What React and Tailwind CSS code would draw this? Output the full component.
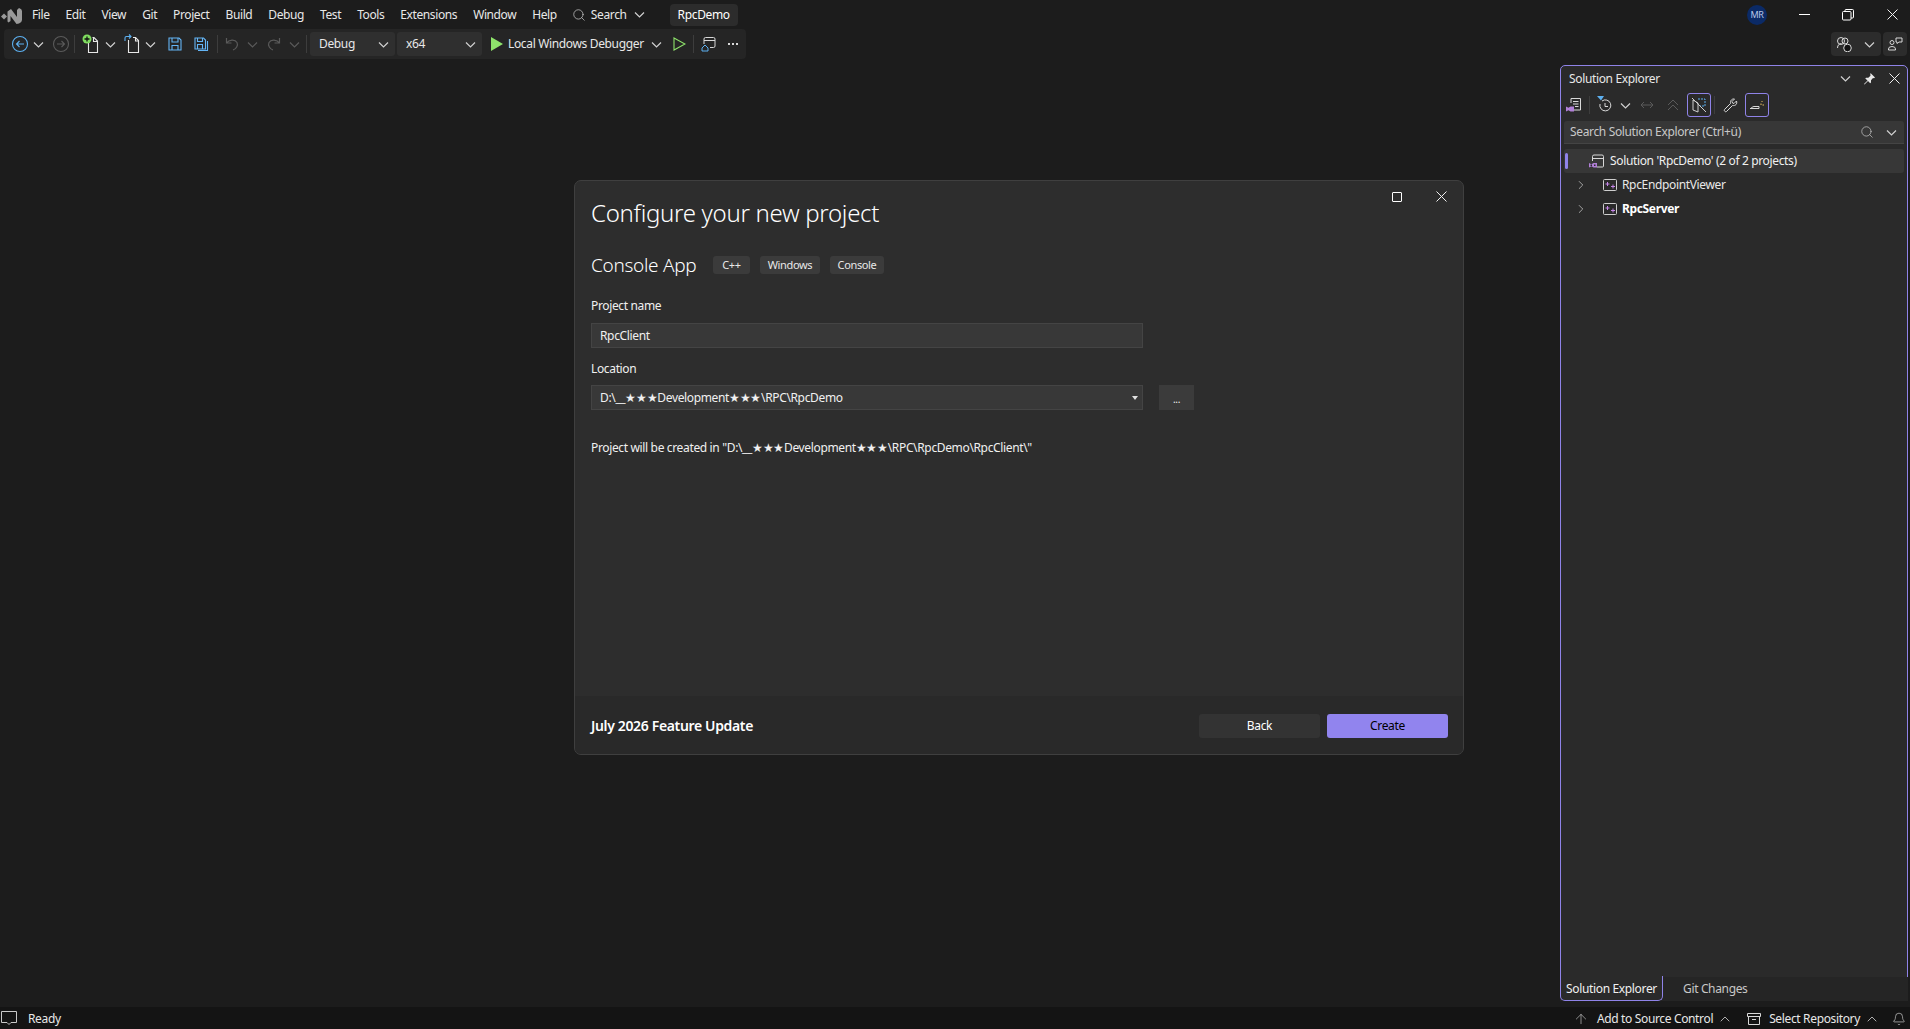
import { ChevronRight, ChevronUp, Search, Bell, ArrowUp } from "lucide-react";

const menus = ["File", "Edit", "View", "Git", "Project", "Build", "Debug", "Test", "Tools", "Extensions", "Window", "Help"];

const Chev = ({ className = "", dim }) => (
  <svg width="13" height="13" viewBox="0 0 13 13" fill="none" stroke={dim ? "#5a5a5a" : "#d0d0d0"} strokeWidth="1.200" className={`shrink-0 ${className}`}>
    <path d="M2 4.500l4.500 4.500L11 4.500" />
  </svg>
);

const CloseIcon = ({ className = "" }) => (
  <svg width="11" height="11" viewBox="0 0 11 11" fill="none" stroke="#f0f0f0" className={`shrink-0 ${className}`}>
    <path d="M.5.5l10 10M10.500.5l-10 10" />
  </svg>
);

const Sep = ({ className = "" }) => <div className={`w-px h-[18px] bg-[#3d3d3d] shrink-0 ${className}`} />;

const Logo = () => (
  <svg width="21" height="18" viewBox="0 0 21 18" className="shrink-0 ml-[1px] mt-[3px]">
    <path d="M0 9.500l3-3 3 3-3 3z" fill="#9a9a9a" />
    <path d="M6.500 4.500L10 2l6 8V3l2-2q3 1 3 3v9q0 2-3 3.500L15.500 17 9.500 9v5l-2 1.500-1-1z" fill="#9a9a9a" />
  </svg>
);

const PageIcon = ({ plus }) => (
  <svg width="20" height="20" viewBox="0 0 20 20" fill="none" stroke="#e8e8e8" strokeWidth="1.100" className="shrink-0">
    <path d={plus ? "M6.500 9v9.500h9V7l-3.500-3.500h-1.500" : "M5.500 6v12.500h10V6.500L12.500 3.500H10"} />
    <path d={plus ? "M11.500 3.500V7.500h4" : "M12.500 3.500V7h3"} />
    {plus && <circle cx="5" cy="5" r="4.500" fill="#7fdc5f" stroke="none" />}
    {plus && <path d="M5 2.500v5M2.500 5h5" stroke="#111111" strokeWidth="1.300" />}
    {!plus && <path d="M2 7V4q0-1.500 1.500-1.500H8M6 .5l2 2-2 2" stroke="#5db0f0" />}
  </svg>
);

const SaveIcon = ({ all }) => (
  <svg width="16" height="16" viewBox="0 0 16 16" fill="none" stroke="#64b5f6" strokeWidth="1.100" className="shrink-0">
    {all ? (
      <>
        <path d="M2 2h8.500l2 2v9H2z" />
        <path d="M4.500 2v3.500h5V2M4.500 13V8.500h5V13" />
        <path d="M14.500 5v9.500H5" />
      </>
    ) : (
      <>
        <path d="M2 2h10l2 2v10H2z" />
        <path d="M5 2v4h6V2M5 14V9.500h6V14" />
      </>
    )}
  </svg>
);

const CircleArrow = ({ dir, color }) => (
  <svg width="18" height="18" viewBox="0 0 18 18" fill="none" stroke={color} strokeWidth="1.100" className="shrink-0">
    <circle cx="9" cy="9" r="7.500" />
    {dir === "left" ? <path d="M13 9H5.500M8.500 6l-3 3 3 3" /> : <path d="M5 9h7.500M9.500 6l3 3-3 3" />}
  </svg>
);

const UndoIcon = ({ flip }) => (
  <svg width="16" height="16" viewBox="0 0 16 16" fill="none" stroke="#5a5a5a" strokeWidth="1.200" className={`shrink-0 ${flip ? "-scale-x-100" : ""}`}>
    <path d="M2.500 2v5h5M2.500 7C5 3.500 11 3 13 6.500c1.500 3-1 6.500-4 7.500" />
  </svg>
);

const SolutionIcon = () => (
  <svg width="16" height="16" viewBox="0 0 16 16" fill="none" className="shrink-0">
    <path d="M3.500 8V3.500q0-1.500 1.500-1.500h8q1.500 0 1.500 1.500V13q0 1-1 1H8" stroke="#d8d8d8" />
    <path d="M3.500 5.500h11" stroke="#d8d8d8" />
    <path d="M0 10v4.500l2.500-1.200 2 1.200H8V10H4.500l-2 1.200z" fill="#b180d7" />
    <rect x="1.500" y="11.500" width="1.500" height="1.500" fill="#2b2b2b" />
    <rect x="5" y="11.500" width="1.500" height="1.500" fill="#2b2b2b" />
  </svg>
);

const ProjectIcon = () => (
  <svg width="14" height="12" viewBox="0 0 14 12" fill="none" className="shrink-0">
    <rect x="0.500" y="0.500" width="13" height="11" rx="1" stroke="#cfcfcf" />
    <path d="M2.500 5h4M4.500 3v4M8 7.500h4M10 5.500v4" stroke="#c586e8" />
  </svg>
);

const Tag = ({ width, children }) => (
  <div className={`h-[18px] flex items-center justify-center bg-[#3b3b3b] rounded-[3px] text-[11px] text-[#e8e8e8] ${width}`}>{children}</div>
);

const TreeRow = ({ bold, children }) => (
  <div className="h-6 flex items-center pl-[13px]">
    <ChevronRight size={14} strokeWidth={1.300} className="text-[#c8c8c8]" />
    <div className="ml-[15px]"><ProjectIcon /></div>
    <span className={`ml-[5px] ${bold ? "font-bold text-white" : "text-[#e8e8e8]"}`}>{children}</span>
  </div>
);

const Dialog = () => (
  <div className="absolute left-[574px] top-[180px] w-[890px] h-[575px] flex flex-col bg-[#2d2d2d] border border-[#3f3f3f] rounded-[7px] overflow-hidden z-10 text-[12px] text-[#f0f0f0]">
    <div className="flex-1 relative pl-4 pt-[16px]">
      <div className="absolute right-[16px] top-[10px] flex items-center gap-[34px]">
        <div className="w-[10px] h-[10px] border border-white rounded-[1px]" />
        <CloseIcon />
      </div>
      <h1 className="text-[24px] leading-[32px] font-light text-white tracking-[-0.3px]">Configure your new project</h1>
      <div className="flex items-center mt-[24px] h-[24px]">
        <div className="w-[122px] text-[19px] leading-[24px] font-light text-white tracking-[-0.3px]">Console App</div>
        <div className="flex gap-[10px]">
          <Tag width="w-[37px]">C++</Tag>
          <Tag width="w-[60px]">Windows</Tag>
          <Tag width="w-[54px]">Console</Tag>
        </div>
      </div>
      <div className="mt-[21px] leading-[16px]">Project name</div>
      <div className="mt-[9px] w-[552px] h-[25px] flex items-center pl-[8px] bg-[#383838] border border-[#444444]">RpcClient</div>
      <div className="mt-[13px] leading-[16px]">Location</div>
      <div className="flex mt-[8px]">
        <div className="w-[552px] h-[25px] flex items-center justify-between pl-[8px] pr-[4px] bg-[#383838] border border-[#444444]">
          <span>D:\__★★★Development★★★\RPC\RpcDemo</span>
          <span className="w-0 h-0 border-x-[3px] border-x-transparent border-t-[4px] border-t-[#e0e0e0]" />
        </div>
        <div className="ml-[16px] w-[35px] h-[25px] bg-[#3b3b3b] flex items-end justify-center pb-[6px] text-[10px] leading-[10px]">...</div>
      </div>
      <div className="mt-[30px] leading-[16px]">Project will be created in "D:\__★★★Development★★★\RPC\RpcDemo\RpcClient\"</div>
    </div>
    <div className="h-[58px] shrink-0 bg-[#292929] flex items-center pl-4 pr-[15px] pt-[2px]">
      <div className="text-[14px] font-semibold text-white -mt-px">July 2026 Feature Update</div>
      <div className="ml-auto flex gap-[7px]">
        <div className="w-[121px] h-6 bg-[#333333] rounded-[3px] flex items-center justify-center text-white">Back</div>
        <div className="w-[121px] h-6 bg-[#9184ee] rounded-[3px] flex items-center justify-center text-black">Create</div>
      </div>
    </div>
  </div>
);

const SolutionExplorer = () => (
  <div className="w-[348px] flex flex-col text-[12px] text-[#e8e8e8]">
    <div className="flex-1 flex flex-col bg-[#2a2a2a] border border-[#8f83e8] rounded-t-[5px]">
      <div className="h-[25px] flex items-center pl-2 pr-[7px]">
        <span>Solution Explorer</span>
        <Chev className="ml-auto" />
        <svg width="13" height="13" viewBox="0 0 13 13" className="ml-[11px]" fill="#e8e8e8"><path d="M7.500 1l4.500 4.500-1 .7-1-.2-2 2.200v2.300l-.8.700L5 9l-3.500 3.500L1 12l3.500-3.500L2.300 6.500l.7-.8h2.300l2.200-2-.2-1z" /></svg>
        <CloseIcon className="ml-[13px]" />
      </div>
      <div className="h-[28px] flex items-center pl-[5px]">
        <svg width="16" height="16" viewBox="0 0 16 16" fill="none" className="shrink-0">
          <path d="M5 6V1.500h9.500V13H8M7 4.500h5.500M7 7h5.500M9 9.500h3.500" stroke="#d8d8d8" />
          <path d="M0 9.500v5l2.500-1.300 2 1.300H8V9.500H4.500l-2 1.300z" fill="#b180d7" />
        </svg>
        <Sep className="ml-[7px]" />
        <svg width="18" height="18" viewBox="0 0 18 18" fill="none" className="ml-[6px] shrink-0">
          <path d="M1 0h7L5 4.500z" fill="#5db0f0" />
          <path d="M6 5a5.500 5.500 0 1 1-2 3" stroke="#d8d8d8" />
          <path d="M9 7v3.500h3" stroke="#d8d8d8" />
        </svg>
        <Chev className="ml-[5px]" />
        <svg width="14" height="10" viewBox="0 0 14 10" fill="none" stroke="#5a5a5a" className="ml-[8px] shrink-0"><path d="M1 5h12M4 2L1 5l3 3M10 2l3 3-3 3" /></svg>
        <svg width="12" height="12" viewBox="0 0 12 12" fill="none" stroke="#5a5a5a" className="ml-[13px] shrink-0"><path d="M1 6l5-5 5 5M1 11l5-5 5 5" /></svg>
        <div className="ml-[8px] w-6 h-6 border border-[#8f83e8] rounded-[3px] flex items-center justify-center shrink-0">
          <svg width="16" height="16" viewBox="0 0 16 16" fill="none">
            <path d="M2 3v10l5 2V6z" stroke="#cfcfcf" /><path d="M7 2h7v7H9" stroke="#5db0f0" strokeDasharray="2 1" /><path d="M1 1l14 14" stroke="#cfcfcf" />
          </svg>
        </div>
        <Sep className="ml-[3px]" />
        <svg width="15" height="15" viewBox="0 0 15 15" fill="none" stroke="#d8d8d8" className="ml-[8px] shrink-0"><path d="M13.500 3L11 5.500 9.500 5 9 3.500 11.500 1C9 .5 7 2.500 7.500 5.500L1.500 11.500c-1 1 1 3 2 2l6-6c3 .5 5-1.500 4-4.500z" /></svg>
        <div className="ml-[7px] w-6 h-6 border border-[#8f83e8] rounded-[3px] flex items-center justify-center shrink-0">
          <svg width="16" height="16" viewBox="0 0 16 16" fill="none">
            <path d="M1 11.500h9v-2H5q-2 0-3 2" stroke="#d8d8d8" /><path d="M12 8V6.500M13.500 8H15M12.500 5l1-1" stroke="#e8c060" />
          </svg>
        </div>
      </div>
      <div className="mx-[3px] mt-[2px] h-[23px] bg-[#373737] border-b border-[#444444] rounded-t-[3px] flex items-center pl-[6px] pr-[6px] text-[#c8c8c8]">
        <span>Search Solution Explorer (Ctrl+ü)</span>
        <Search size={14} strokeWidth={1.200} className="ml-auto" />
        <Chev className="ml-[11px]" />
      </div>
      <div className="mt-[5px]">
        <div className="mx-[3px] h-6 bg-[#373737] rounded-[3px] flex items-center relative">
          <div className="absolute left-[1px] top-[4px] w-[3px] h-[16px] rounded-full bg-[#8f83e8]" />
          <div className="ml-[25px]"><SolutionIcon /></div>
          <span className="ml-[5px] text-[#f0f0f0]">Solution 'RpcDemo' (2 of 2 projects)</span>
        </div>
        <TreeRow>RpcEndpointViewer</TreeRow>
        <TreeRow bold>RpcServer</TreeRow>
      </div>
    </div>
    <div className="h-[24px] flex bg-[#252525] -mt-px">
      <div className="w-[103px] border border-t-0 border-[#8f83e8] rounded-b-[5px] bg-[#2a2a2a] flex items-center justify-center pt-px text-[#f0f0f0] relative z-10 -mt-px">Solution Explorer</div>
      <div className="pl-[20px] flex items-center text-[#c8c8c8]">Git Changes</div>
    </div>
  </div>
);

export default function App() {
  return (
    <div className="relative h-screen w-full overflow-hidden flex flex-col bg-[#1c1c1c] font-['Noto_Sans',sans-serif] tracking-[-0.35px]">
      {/* title bar */}
      <div className="h-[29px] shrink-0 flex items-center text-[12px] text-[#e8e8e8]">
        <Logo />
        <div className="flex gap-4 ml-[10px] tracking-[-0.4px]">
          {menus.map((m) => <span key={m}>{m}</span>)}
        </div>
        <div className="flex items-center ml-[15px]">
          <Search size={14} strokeWidth={1.200} className="text-[#d0d0d0]" />
          <span className="ml-[5px]">Search</span>
          <Chev className="ml-[6px]" />
        </div>
        <div className="ml-[24px] w-[68px] h-[22px] bg-[#2c2c2c] rounded-[4px] flex items-center justify-center text-white">RpcDemo</div>
        <div className="ml-auto w-[20px] h-[20px] rounded-full bg-[#0b2a66] text-[#b8c8e8] text-[9px] flex items-center justify-center">MR</div>
        <div className="ml-[32px] w-[11px] h-px bg-white" />
        <svg width="12" height="12" viewBox="0 0 12 12" fill="none" stroke="#ffffff" className="ml-[32px]">
          <rect x="0.500" y="2.500" width="8.500" height="8.500" rx="1" /><path d="M3 2.500V1.500q0-1 1-1h6.500q1 0 1 1V8q0 1-1 1H9" />
        </svg>
        <CloseIcon className="ml-[33px] mr-[12px]" />
      </div>
      {/* toolbar */}
      <div className="h-[30px] shrink-0 flex items-center text-[12px] text-[#e8e8e8]">
        <div className="ml-[4px] w-[742px] h-[30px] bg-[#252525] rounded-[4px] flex items-center">
          <div className="ml-[7px]"><CircleArrow dir="left" color="#5db0f0" /></div>
          <Chev className="ml-[3px]" />
          <div className="ml-[7px]"><CircleArrow dir="right" color="#5a5a5a" /></div>
          <Sep className="ml-[4px]" />
          <div className="ml-[7px]"><PageIcon plus /></div>
          <Chev className="ml-[2px]" />
          <div className="ml-[6px]"><PageIcon /></div>
          <Chev className="ml-[1px]" />
          <div className="ml-[10px]"><SaveIcon /></div>
          <div className="ml-[10px]"><SaveIcon all /></div>
          <Sep className="ml-[8px]" />
          <div className="ml-[6px]"><UndoIcon /></div>
          <Chev dim className="ml-[6px]" />
          <div className="ml-[7px]"><UndoIcon flip /></div>
          <Chev dim className="ml-[6px]" />
          <Sep className="ml-[5px]" />
          <div className="ml-[3px] w-[85px] h-6 bg-[#2f2f2f] rounded-[3px] flex items-center justify-between pl-[9px] pr-[5px]">Debug<Chev /></div>
          <div className="ml-[2px] w-[85px] h-6 bg-[#2f2f2f] rounded-[3px] flex items-center justify-between pl-[9px] pr-[5px]">x64<Chev /></div>
          <svg width="12" height="14" viewBox="0 0 12 14" className="ml-[9px] shrink-0"><path d="M0 0l12 7-12 7z" fill="#8ee36b" /></svg>
          <span className="ml-[5px] whitespace-nowrap">Local Windows Debugger</span>
          <Chev className="ml-[6px]" />
          <svg width="13" height="14" viewBox="0 0 13 14" fill="none" stroke="#8ee36b" strokeWidth="1.100" className="ml-[10px] shrink-0"><path d="M1 1l11 6-11 6z" /></svg>
          <Sep className="ml-[7px]" />
          <svg width="15" height="16" viewBox="0 0 15 16" fill="none" className="ml-[7px] shrink-0">
            <path d="M3 8V3q0-1.500 1.500-1.500h8q1.500 0 1.500 1.500v7q0 1.500-1.500 1.500H9M3 4.500h11" stroke="#d8d8d8" />
            <path d="M1 15v-3l3-3 3 3v3z" stroke="#5db0f0" />
          </svg>
          <div className="ml-[12px] flex gap-[2px]">
            <span className="w-[2px] h-[2px] bg-[#d8d8d8]" />
            <span className="w-[2px] h-[2px] bg-[#d8d8d8]" />
            <span className="w-[2px] h-[2px] bg-[#d8d8d8]" />
          </div>
        </div>
        <div className="ml-auto mr-[3px] flex items-center gap-[2px]">
          <div className="w-[50px] h-6 bg-[#2c2c2c] rounded-[4px] flex items-center pl-[5px]">
            <svg width="16" height="16" viewBox="0 0 16 16" fill="none" stroke="#d8d8d8" className="shrink-0">
              <circle cx="5" cy="5" r="3.500" /><path d="M1.500 12c0-3 2-4.500 4-4.500" /><circle cx="9" cy="5" r="3" />
              <circle cx="11.500" cy="12" r="3.800" fill="#111111" stroke="#d8d8d8" />
            </svg>
            <Chev className="ml-[11px]" />
          </div>
          <div className="w-6 h-6 bg-[#2c2c2c] rounded-[4px] flex items-center justify-center">
            <svg width="16" height="16" viewBox="0 0 16 16" fill="none" stroke="#d8d8d8">
              <circle cx="5" cy="6.500" r="2" /><path d="M1.500 14v-1q0-2.500 3.500-2.500T8.500 13v1zM9 2h6v4h-3l-2 1.500V6H9z" />
            </svg>
          </div>
        </div>
      </div>
      {/* body */}
      <div className="flex-1 min-h-0 flex justify-end pt-[6px] pr-[2px] pb-[6px]">
        <SolutionExplorer />
      </div>
      {/* status bar */}
      <div className="h-[22px] shrink-0 bg-[#141414] flex items-center pt-px text-[12px] text-[#e8e8e8]">
        <svg width="16" height="15" viewBox="0 0 16 15" fill="none" stroke="#c8c8c8" className="ml-[1px] shrink-0"><path d="M.500.500h15v11H10l-2 2-2-2H.500z" /></svg>
        <span className="ml-[11px]">Ready</span>
        <ArrowUp size={16} strokeWidth={1} className="ml-auto text-[#c8c8c8]" />
        <span className="ml-[8px]">Add to Source Control</span>
        <ChevronUp size={16} strokeWidth={1.100} className="ml-[4px]" />
        <svg width="14" height="14" viewBox="0 0 14 14" fill="none" stroke="#d8d8d8" className="ml-[14px] shrink-0"><path d="M.500 1.500h13v3H.500zM1.500 4.500v8h11v-8M5 7.500h4" /></svg>
        <span className="ml-[8px]">Select Repository</span>
        <ChevronUp size={16} strokeWidth={1.100} className="ml-[4px]" />
        <Bell size={14} strokeWidth={1} className="ml-[12px] mr-[4px]" />
      </div>
      <Dialog />
    </div>
  );
}
